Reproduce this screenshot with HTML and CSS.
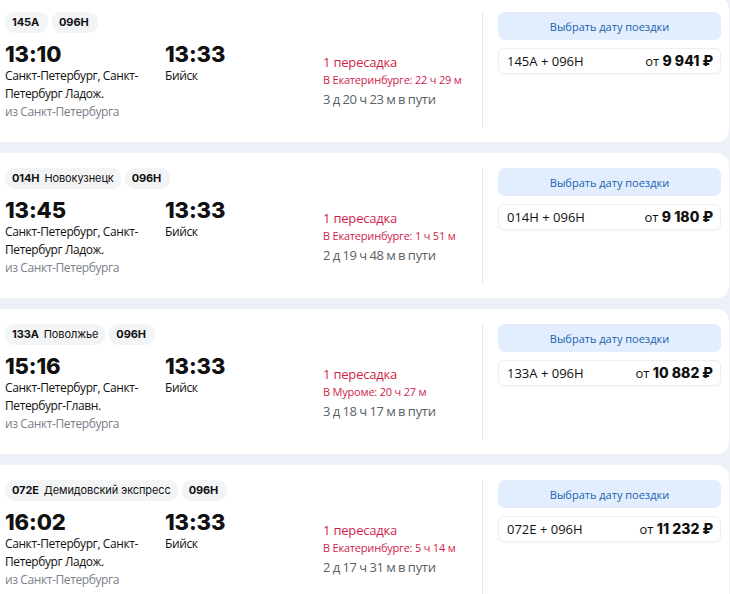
FILE: index.html
```html
<!DOCTYPE html>
<html lang="ru">
<head>
<meta charset="utf-8">
<link rel="stylesheet" href="styles.css">
</head>
<body>
<div class="list">

  <div class="card">
    <div class="main">
      <div class="badges">
        <span class="badge"><b>145А</b></span>
        <span class="badge"><b>096Н</b></span>
      </div>
      <div class="route">
        <div class="col dep">
          <div class="time">13:10</div>
          <div class="station">Санкт-Петербург, Санкт-Петербург Ладож.</div>
          <div class="from">из Санкт-Петербурга</div>
        </div>
        <div class="col arr">
          <div class="time">13:33</div>
          <div class="station">Бийск</div>
        </div>
        <div class="col transfer">
          <div class="changes">1 пересадка</div>
          <div class="where">В Екатеринбурге: 22 ч 29 м</div>
          <div class="duration">3 д 20 ч 23 м в пути</div>
        </div>
      </div>
    </div>
    <div class="side">
      <button class="pick">Выбрать дату поездки</button>
      <div class="price"><span class="trains">145А + 096Н</span><span class="cost">от <b>9 941 ₽</b></span></div>
    </div>
  </div>

  <div class="card">
    <div class="main">
      <div class="badges">
        <span class="badge"><b>014Н</b> Новокузнецк</span>
        <span class="badge"><b>096Н</b></span>
      </div>
      <div class="route">
        <div class="col dep">
          <div class="time">13:45</div>
          <div class="station">Санкт-Петербург, Санкт-Петербург Ладож.</div>
          <div class="from">из Санкт-Петербурга</div>
        </div>
        <div class="col arr">
          <div class="time">13:33</div>
          <div class="station">Бийск</div>
        </div>
        <div class="col transfer">
          <div class="changes">1 пересадка</div>
          <div class="where">В Екатеринбурге: 1 ч 51 м</div>
          <div class="duration">2 д 19 ч 48 м в пути</div>
        </div>
      </div>
    </div>
    <div class="side">
      <button class="pick">Выбрать дату поездки</button>
      <div class="price"><span class="trains">014Н + 096Н</span><span class="cost">от <b>9 180 ₽</b></span></div>
    </div>
  </div>

  <div class="card">
    <div class="main">
      <div class="badges">
        <span class="badge"><b>133А</b> Поволжье</span>
        <span class="badge"><b>096Н</b></span>
      </div>
      <div class="route">
        <div class="col dep">
          <div class="time">15:16</div>
          <div class="station">Санкт-Петербург, Санкт-Петербург-Главн.</div>
          <div class="from">из Санкт-Петербурга</div>
        </div>
        <div class="col arr">
          <div class="time">13:33</div>
          <div class="station">Бийск</div>
        </div>
        <div class="col transfer">
          <div class="changes">1 пересадка</div>
          <div class="where">В Муроме: 20 ч 27 м</div>
          <div class="duration">3 д 18 ч 17 м в пути</div>
        </div>
      </div>
    </div>
    <div class="side">
      <button class="pick">Выбрать дату поездки</button>
      <div class="price"><span class="trains">133А + 096Н</span><span class="cost">от <b>10 882 ₽</b></span></div>
    </div>
  </div>

  <div class="card">
    <div class="main">
      <div class="badges">
        <span class="badge"><b>072Е</b> Демидовский экспресс</span>
        <span class="badge"><b>096Н</b></span>
      </div>
      <div class="route">
        <div class="col dep">
          <div class="time">16:02</div>
          <div class="station">Санкт-Петербург, Санкт-Петербург Ладож.</div>
          <div class="from">из Санкт-Петербурга</div>
        </div>
        <div class="col arr">
          <div class="time">13:33</div>
          <div class="station">Бийск</div>
        </div>
        <div class="col transfer">
          <div class="changes">1 пересадка</div>
          <div class="where">В Екатеринбурге: 5 ч 14 м</div>
          <div class="duration">2 д 17 ч 31 м в пути</div>
        </div>
      </div>
    </div>
    <div class="side">
      <button class="pick">Выбрать дату поездки</button>
      <div class="price"><span class="trains">072Е + 096Н</span><span class="cost">от <b>11 232 ₽</b></span></div>
    </div>
  </div>

</div>
</body>
</html>
```

FILE: styles.css
```css
* { box-sizing: border-box; }
html, body { margin: 0; padding: 0; }
body {
  background: #edf1f7;
  font-family: "Open Sans", "Noto Sans", sans-serif;
  color: #111;
  overflow: hidden;
}
.list {
  display: flex;
  flex-direction: column;
  gap: 11px;
  margin-top: -3px;
  margin-left: -12px;
  width: 741px;
}
.card {
  background: #fff;
  border-radius: 12px;
  height: 145px;
  display: flex;
  padding: 15px 8px 14px 17px;
}
.main {
  width: 477px;
  display: flex;
  flex-direction: column;
}
.badges {
  display: flex;
  gap: 4px;
  height: 21px;
}
.badge {
  background: #f3f4f6;
  border-radius: 9px;
  padding: 0 7px;
  font-family: "Inter", sans-serif;
  font-size: 11px;
  line-height: 21px;
  color: #111;
  letter-spacing: -0.1px;
}
.badge b { font-weight: 700; margin-right: 2px; }
.route {
  display: grid;
  grid-template-columns: 160px 158px 1fr;
  margin-top: 8px;
}
.time {
  font-family: "Inter", sans-serif;
  font-weight: 800;
  font-size: 22px;
  line-height: 26px;
  letter-spacing: -0.1px;
}
.station {
  font-size: 12px;
  line-height: 18px;
  letter-spacing: -0.4px;
  padding-right: 4px;
}
.from {
  font-size: 12px;
  line-height: 18px;
  letter-spacing: -0.4px;
  color: #7b8089;
}
.transfer { padding-top: 12px; }
.changes { color: #cf1d4b; font-size: 13px; line-height: 18px; letter-spacing: -0.2px; }
.where { color: #cf1d4b; font-size: 11px; line-height: 18px; letter-spacing: -0.2px; }
.duration { color: #5b5f66; font-size: 13px; line-height: 20px; letter-spacing: -0.3px; word-spacing: -0.5px; }
.side {
  width: 239px;
  border-left: 1px solid #e6e9ee;
  padding-left: 15px;
  display: flex;
  flex-direction: column;
  gap: 8px;
}
.pick {
  height: 28px;
  border: 0;
  border-radius: 7px;
  background: #e2eefd;
  color: #165fb0;
  font-family: "Open Sans", sans-serif;
  font-size: 11px;
  cursor: pointer;
}
.price {
  height: 26px;
  border: 1px solid #eceef2;
  border-radius: 6px;
  box-shadow: 0 1px 2px rgba(0,0,0,0.04);
  display: flex;
  align-items: center;
  justify-content: space-between;
  padding: 0 7px 0 8px;
  font-size: 13px;
}
.cost b { font-size: 14px; font-weight: 800; font-family: "Inter", sans-serif; }
```
